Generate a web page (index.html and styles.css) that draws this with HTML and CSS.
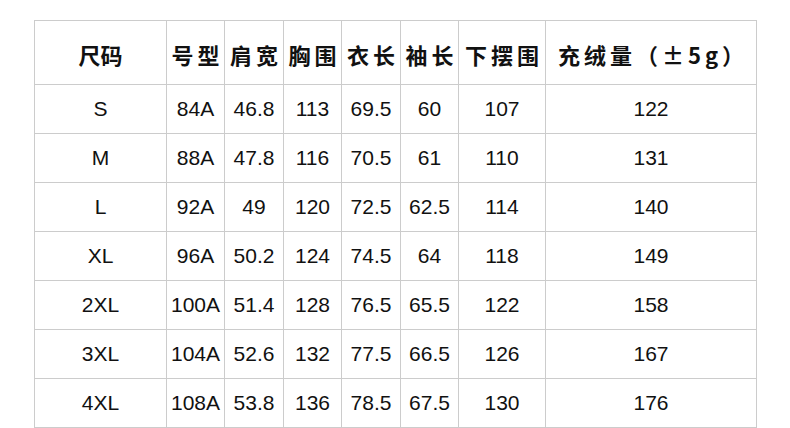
FILE: index.html
```html
<!DOCTYPE html>
<html lang="zh">
<head>
<meta charset="utf-8">
<link rel="stylesheet" href="styles.css">
</head>
<body>
<table class="size-table">
  <colgroup>
    <col class="c1"><col class="c2"><col class="c3"><col class="c4"><col class="c5"><col class="c6"><col class="c7"><col class="c8">
  </colgroup>
  <thead>
    <tr>
      <th class="tight">尺码</th><th>号型</th><th>肩宽</th><th>胸围</th><th>衣长</th><th>袖长</th><th>下摆围</th><th>充绒量（±5g）</th>
    </tr>
  </thead>
  <tbody>
    <tr><td>S</td><td>84A</td><td>46.8</td><td>113</td><td>69.5</td><td>60</td><td>107</td><td>122</td></tr>
    <tr><td>M</td><td>88A</td><td>47.8</td><td>116</td><td>70.5</td><td>61</td><td>110</td><td>131</td></tr>
    <tr><td>L</td><td>92A</td><td>49</td><td>120</td><td>72.5</td><td>62.5</td><td>114</td><td>140</td></tr>
    <tr><td>XL</td><td>96A</td><td>50.2</td><td>124</td><td>74.5</td><td>64</td><td>118</td><td>149</td></tr>
    <tr><td>2XL</td><td>100A</td><td>51.4</td><td>128</td><td>76.5</td><td>65.5</td><td>122</td><td>158</td></tr>
    <tr><td>3XL</td><td>104A</td><td>52.6</td><td>132</td><td>77.5</td><td>66.5</td><td>126</td><td>167</td></tr>
    <tr><td>4XL</td><td>108A</td><td>53.8</td><td>136</td><td>78.5</td><td>67.5</td><td>130</td><td>176</td></tr>
  </tbody>
</table>
</body>
</html>
```
FILE: styles.css
```css
html, body {
  margin: 0;
  padding: 0;
  background: #ffffff;
}
body {
  padding: 20px 0 0 34px;
}
.size-table {
  border-collapse: collapse;
  table-layout: fixed;
  width: 722px;
  color: #111111;
}
.c1 { width: 132px; }
.c2 { width: 58px; }
.c3 { width: 59px; }
.c4 { width: 58px; }
.c5 { width: 59px; }
.c6 { width: 58px; }
.c7 { width: 87px; }
.c8 { width: 211px; }
.size-table th,
.size-table td {
  border: 1px solid #cccccc;
  padding: 0;
  text-align: center;
  vertical-align: middle;
  white-space: nowrap;
  overflow: hidden;
}
.size-table th {
  height: 60px;
  font-family: "Noto Sans CJK SC", "Noto Sans", sans-serif;
  font-weight: 700;
  font-size: 22px;
  letter-spacing: 4px;
  text-indent: 4px;
  padding-top: 3px;
}
.size-table th.tight {
  letter-spacing: 0;
  text-indent: 0;
}
.size-table td {
  height: 48px;
  font-family: "Liberation Sans", Arial, sans-serif;
  font-size: 21px;
}
```
